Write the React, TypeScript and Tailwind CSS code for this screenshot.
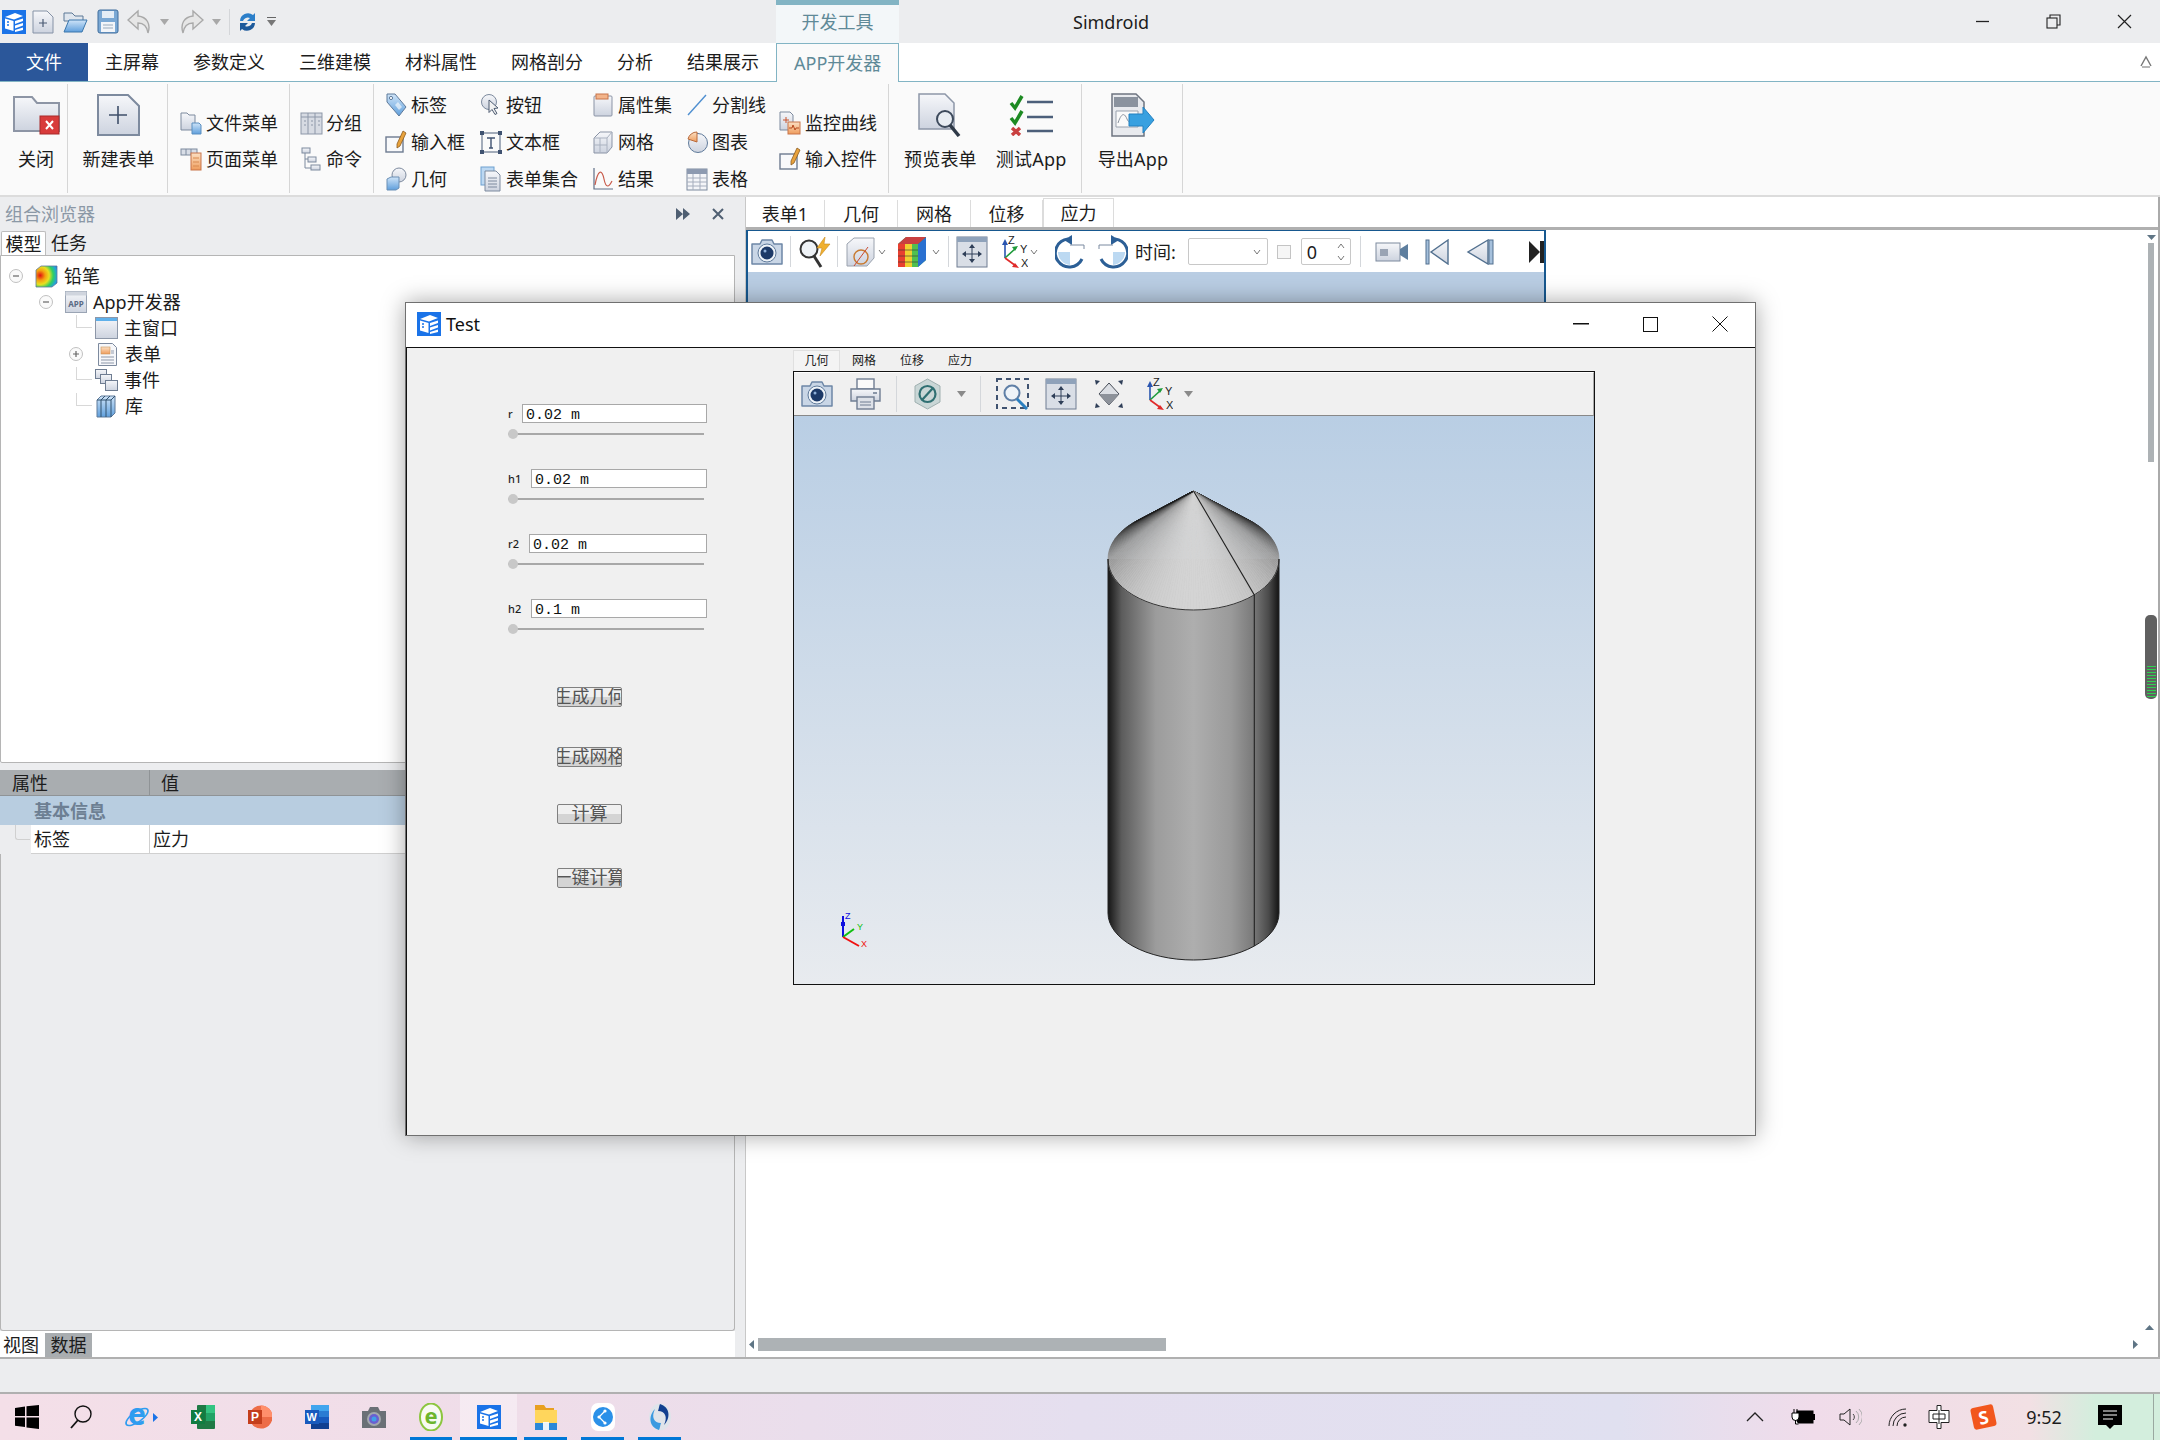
import type { ReactNode } from "react";

const S = ({ w, h, children, className = "" }: { w: number; h: number; children: ReactNode; className?: string }) => (
  <svg width={w} height={h} viewBox={`0 0 ${w} ${h}`} className={`block shrink-0 ${className}`} aria-hidden="true">
    {children}
  </svg>
);

const Defs = () => (
  <svg width="0" height="0" className="absolute">
    <defs>
      <linearGradient id="sheet" x1="0" y1="0" x2="0" y2="1">
        <stop offset="0" stopColor="#f6f7fa" />
        <stop offset="1" stopColor="#cdd3df" />
      </linearGradient>
      <linearGradient id="blue" x1="0" y1="0" x2="0" y2="1">
        <stop offset="0" stopColor="#cfe4f8" />
        <stop offset="1" stopColor="#5f9fdc" />
      </linearGradient>
      <linearGradient id="orange" x1="0" y1="0" x2="0" y2="1">
        <stop offset="0" stopColor="#fbe0c4" />
        <stop offset="1" stopColor="#ef9c5c" />
      </linearGradient>
      <linearGradient id="cyl" x1="1108" y1="0" x2="1279" y2="0" gradientUnits="userSpaceOnUse">
        <stop offset="0" stopColor="#161616" />
        <stop offset="0.08" stopColor="#5c5c5c" />
        <stop offset="0.28" stopColor="#9c9c9c" />
        <stop offset="0.5" stopColor="#aeaeae" />
        <stop offset="0.72" stopColor="#9a9a9a" />
        <stop offset="0.85" stopColor="#7a7a7a" />
        <stop offset="0.94" stopColor="#4a4a4a" />
        <stop offset="1" stopColor="#141414" />
      </linearGradient>
      <radialGradient id="rainbow" cx="0.2" cy="0.45" r="0.95">
        <stop offset="0" stopColor="#e01010" />
        <stop offset="0.25" stopColor="#f5a010" />
        <stop offset="0.45" stopColor="#e8e020" />
        <stop offset="0.65" stopColor="#30d060" />
        <stop offset="0.85" stopColor="#20a0e0" />
        <stop offset="1" stopColor="#2050c0" />
      </radialGradient>
    </defs>
  </svg>
);

const Logo = ({ s = 24 }: { s?: number }) => (
  <svg width={s} height={s} viewBox="0 0 24 24" className="block shrink-0" aria-hidden="true">
    <rect width="24" height="24" fill="#1a73e8" />
    <path d="M3 7L13 3l8 3-9 3.500zM13 11l8-2.500V11l-8 3zM13 15.500l8-2.500v2.500l-8 3zM13 20l8-2.500V20l-8 2z" fill="#fff" />
    <path d="M3 8.500l8.500 2.500v10L3 18.500z" fill="#fff" />
    <path d="M5 12h2M5 15h2" stroke="#1a73e8" strokeWidth="1.400" />
  </svg>
);

/* ---- quick access ---- */
const QNew = () => (
  <S w={22} h={24}>
    <path d="M1 1h14l6 6v16H1z" fill="url(#sheet)" stroke="#8592a6" />
    <path d="M11 9v8M7 13h8" stroke="#4a5a74" strokeWidth="1.2" />
  </S>
);
const QOpen = () => (
  <S w={25} h={24}>
    <path d="M1 3h8l3 3h8v5H1z" fill="#dfe6ee" stroke="#5d7896" />
    <path d="M1 22l5-12h18l-5 12z" fill="url(#blue)" stroke="#3a76ac" />
  </S>
);
const QSave = () => (
  <S w={22} h={25}>
    <rect x="1" y="1" width="20" height="23" rx="2" fill="#7aa8d4" stroke="#3f6d9c" />
    <rect x="5" y="2" width="12" height="7" fill="#e4edf6" />
    <rect x="4" y="13" width="14" height="10" fill="#f2f5f9" />
    <path d="M6 16h10M6 19h10" stroke="#9ab" />
  </S>
);
const QUndo = ({ flip = false }: { flip?: boolean }) => (
  <S w={26} h={26} className={flip ? "-scale-x-100" : ""}>
    <path d="M11 2L1 11l10 9v-6c6 0 9 3 10 10 3-9-1-16-10-17z" fill="#e6e6e6" stroke="#a9a9a9" strokeWidth="1.4" />
  </S>
);
const TriDown = ({ c = "#a8a8a8", w = 9, h = 6 }: { c?: string; w?: number; h?: number }) => (
  <S w={w} h={h}>
    <path d={`M0 0h${w}L${w / 2} ${h}z`} fill={c} />
  </S>
);
const QRefresh = () => (
  <S w={19} h={24}>
    <path d="M2 11a8 8 0 0 1 13-6l2-2v8h-8l3-3a5 5 0 0 0-7 3z" fill="#2c7fc9" />
    <path d="M17 13a8 8 0 0 1-13 6l-2 2v-8h8l-3 3a5 5 0 0 0 7-3z" fill="#1d5a9b" />
  </S>
);

/* ---- ribbon ---- */
const CloseIcon = () => (
  <S w={47} h={40}>
    <path d="M1 2h18l5 6h22v28H1z" fill="url(#sheet)" stroke="#8d95a5" strokeWidth="2" />
    <rect x="27" y="21" width="19" height="18" fill="#d83b3b" stroke="#a82a2a" />
    <path d="M33 26l7 8M40 26l-7 8" stroke="#fff" strokeWidth="2" />
  </S>
);
const NewFormIcon = () => (
  <S w={43} h={42}>
    <path d="M1 1h30l11 11v29H1z" fill="url(#sheet)" stroke="#7d8a9e" strokeWidth="2" />
    <path d="M21 12v18M12 21h18" stroke="#3f4f6a" strokeWidth="1.6" />
  </S>
);
const FileMenuIcon = () => (
  <S w={22} h={24}>
    <path d="M1 2h6l2 2h6v15H1z" fill="url(#sheet)" stroke="#7d8a9e" />
    <path d="M12 12h7l2 2v9h-9z" fill="url(#blue)" stroke="#5b8fc0" />
  </S>
);
const PageMenuIcon = () => (
  <S w={22} h={24}>
    <rect x="1" y="2" width="16" height="6" fill="#d8dde6" stroke="#7d8a9e" />
    <path d="M6 2v6M11 2v6" stroke="#7d8a9e" />
    <rect x="11" y="6" width="10" height="17" fill="url(#orange)" stroke="#c8744a" />
    <path d="M13 11h6M13 15h6M13 19h6" stroke="#d88a50" />
  </S>
);
const GroupIcon = () => (
  <S w={23} h={24}>
    <rect x="1" y="2" width="21" height="21" fill="#d7dbe3" stroke="#8d97a8" />
    <path d="M1 6h21M8 2v21M15 2v21" stroke="#8d97a8" />
    <path d="M4 10h2M4 14h2M11 10h2M11 14h2M18 10h2M18 14h2" stroke="#8d97a8" />
  </S>
);
const CommandIcon = () => (
  <S w={22} h={24}>
    <rect x="2" y="1" width="8" height="5" fill="url(#sheet)" stroke="#7d8a9e" />
    <rect x="8" y="10" width="8" height="5" fill="url(#sheet)" stroke="#7d8a9e" />
    <rect x="11" y="18" width="9" height="5" fill="url(#sheet)" stroke="#7d8a9e" />
    <path d="M5 6v15h6M5 12h3" fill="none" stroke="#7d8a9e" />
  </S>
);
const TagIcon = () => (
  <S w={22} h={24}>
    <path d="M2 1h8l11 13-7 9L2 9z" fill="url(#blue)" stroke="#5f7a9a" />
    <circle cx="6" cy="5" r="1.6" fill="#fff" stroke="#5f7a9a" />
    <path d="M10 12l4 5 3-3-4-5z" fill="#fff" opacity=".6" />
  </S>
);
const BtnIcon = () => (
  <S w={22} h={24}>
    <circle cx="9" cy="9" r="7.5" fill="url(#sheet)" stroke="#7d8a9e" />
    <path d="M9 7l9 8-4 .5 3 5-2 1-3-5-3 3z" fill="#f2f2f2" stroke="#4c5a70" />
  </S>
);
const AttrIcon = () => (
  <S w={20} h={24}>
    <rect x="1" y="3" width="18" height="20" rx="1" fill="url(#sheet)" stroke="#8a93a5" />
    <rect x="3" y="1" width="12" height="5" fill="#f3b48a" stroke="#c8744a" />
  </S>
);
const DivIcon = () => (
  <S w={22} h={24}>
    <path d="M2 22L20 2" stroke="#4f8fd0" strokeWidth="1.4" />
  </S>
);
const InputIcon = () => (
  <S w={22} h={24}>
    <rect x="1" y="7" width="17" height="15" fill="#f8f9fb" stroke="#6d7b90" strokeWidth="1.4" />
    <path d="M18 1l3 2-6 13-3 2 0-4z" fill="#e8a23c" stroke="#8a5a20" strokeWidth=".8" />
  </S>
);
const TextBoxIcon = () => (
  <S w={22} h={24}>
    <rect x="2" y="3" width="18" height="19" fill="none" stroke="#4c5f7a" />
    <path d="M0 1h4v4H0zM18 1h4v4h-4zM0 20h4v4H0zM18 20h4v4h-4z" fill="#3f5270" />
    <path d="M7 8h8M11 8v10M9 18h4" stroke="#3f5270" strokeWidth="1.4" fill="none" />
  </S>
);
const MeshIcon = () => (
  <S w={20} h={24}>
    <path d="M1 8l6-6h12v15l-5 6H1z" fill="url(#sheet)" stroke="#8a93a5" />
    <path d="M1 8h13v15M14 8l5-6M7 8v15M1 15h13" stroke="#aab2c0" fill="none" />
  </S>
);
const PieIcon = () => (
  <S w={22} h={24}>
    <circle cx="12" cy="13" r="9.5" fill="url(#sheet)" stroke="#5f7a9a" />
    <path d="M11 12V2a9 9 0 0 0-9 7z" fill="url(#orange)" stroke="#b9693a" />
  </S>
);
const GeomIcon = () => (
  <S w={22} h={24}>
    <circle cx="14" cy="8" r="7" fill="url(#sheet)" stroke="#7d8a9e" />
    <path d="M2 12l4-2h8v11l-3 2H2z" fill="url(#blue)" stroke="#6a8fb5" />
  </S>
);
const FormSetIcon = () => (
  <S w={22} h={26}>
    <rect x="1" y="1" width="13" height="18" fill="#bcd8f2" stroke="#6da0d0" />
    <path d="M5 5h11l4 4v16H5z" fill="url(#sheet)" stroke="#7d8a9e" />
    <path d="M8 12h9M8 15h9M8 18h9M8 21h9" stroke="#7d8a9e" />
  </S>
);
const ResultIcon = () => (
  <S w={22} h={24}>
    <path d="M2 1v21h19" fill="none" stroke="#5f6f88" strokeWidth="1.2" />
    <path d="M3 18c3-16 7-16 9-6s5 8 8 2" fill="none" stroke="#c85a4a" strokeWidth="1.2" />
  </S>
);
const TableIcon = () => (
  <S w={22} h={24}>
    <rect x="1" y="2" width="20" height="21" fill="#f4f5f8" stroke="#7d8a9e" />
    <rect x="1" y="2" width="20" height="5" fill="#8d9ab0" />
    <path d="M1 11h20M1 15h20M1 19h20M7 7v16M14 7v16" stroke="#a6aebd" />
  </S>
);
const MonitorIcon = () => (
  <S w={22} h={24}>
    <path d="M1 1h10l3 3v15H1z" fill="url(#sheet)" stroke="#7d8a9e" />
    <path d="M7 6v6M4 9h6" stroke="#c8542f" />
    <rect x="9" y="11" width="12" height="12" fill="url(#orange)" stroke="#c8744a" />
    <path d="M10 17h3l1-3 2 5 1-2h3" fill="none" stroke="#b84a20" />
  </S>
);
const PreviewIcon = () => (
  <S w={44} h={44}>
    <path d="M1 1h26l9 9v26H1z" fill="url(#sheet)" stroke="#8d97a8" strokeWidth="1.5" />
    <circle cx="27" cy="26" r="8" fill="#e8edf3" stroke="#3d4a5c" strokeWidth="2" />
    <path d="M32 32l9 11" stroke="#2f3a48" strokeWidth="3.5" />
  </S>
);
const TestIcon = () => (
  <S w={45} h={42}>
    <path d="M2 9l4 5 7-12" fill="none" stroke="#1d8a22" strokeWidth="3.5" />
    <path d="M2 24l4 5 7-12" fill="none" stroke="#1d8a22" strokeWidth="3.5" />
    <path d="M3 34l8 7M11 34l-8 7" stroke="#c94040" strokeWidth="3.5" />
    <path d="M18 8h26M18 23h26M18 37h26" stroke="#4c5f7a" strokeWidth="2.4" />
  </S>
);
const ExportIcon = () => (
  <S w={44} h={44}>
    <path d="M1 1h24l8 8v34H1z" fill="#e8eaee" stroke="#6d7480" strokeWidth="1.5" />
    <rect x="3" y="4" width="24" height="10" fill="#8a929e" />
    <path d="M5 18h22v16H5z" fill="#fafafa" stroke="#9aa2ae" />
    <path d="M7 30c4-12 7-9 9-4s5 3 8-4" fill="none" stroke="#8a929e" />
    <path d="M18 21h14v-7l11 13-11 13v-7H18z" fill="#37a0e0" stroke="#2280c0" />
  </S>
);

/* ---- embedded toolbars ---- */
const Camera = ({ w = 34 }: { w?: number }) => (
  <svg width={w} height={28} viewBox="0 0 34 28" className="block shrink-0" aria-hidden="true">
    <path d="M2 6h8l2-4h10l2 4h8v20H2z" fill="#c9d6e6" stroke="#6d87a6" strokeWidth="1.5" strokeLinejoin="round" />
    <circle cx="17" cy="15" r="9" fill="#eef3f8" stroke="#5f7a9a" />
    <circle cx="17" cy="15" r="6.5" fill="#1d3a68" />
    <circle cx="15" cy="13" r="1.5" fill="#8fb0d8" />
  </svg>
);
const FitIcon = ({ w = 32 }: { w?: number }) => (
  <svg width={w} height={32} viewBox="0 0 32 32" className="block shrink-0" aria-hidden="true">
    <rect x="1" y="1" width="30" height="30" fill="#d9dee6" stroke="#6f7d92" />
    <rect x="1" y="1" width="30" height="5" fill="#8fa2ba" />
    <path d="M16 9v17M8 18h16" stroke="#2f3f58" />
    <path d="M16 8l-3 4h6zM16 27l-3-4h6zM6 18l4-3v6zM26 18l-4-3v6z" fill="#2f3f58" />
  </svg>
);
const Axes = ({ w = 28, h = 34 }: { w?: number; h?: number }) => (
  <svg width={w} height={h} viewBox="0 0 28 34" className="block shrink-0 [font-family:'Liberation_Sans',sans-serif]" aria-hidden="true">
    <path d="M5 23V7" stroke="#2a55b0" strokeWidth="1.6" />
    <path d="M5 4l-3 6h6z" fill="#2a55b0" />
    <path d="M5 23l11-10" stroke="#1d9a3a" strokeWidth="1.6" />
    <path d="M18 11l-6 1 3 4z" fill="#1d9a3a" />
    <path d="M5 23l11 8" stroke="#e02a2a" strokeWidth="1.6" />
    <path d="M19 33l-7-1 3-4z" fill="#e02a2a" />
    <text x="8" y="9" fontSize="11" fill="#222">Z</text>
    <text x="20" y="18" fontSize="11" fill="#222">Y</text>
    <text x="21" y="32" fontSize="11" fill="#222">X</text>
  </svg>
);
const Rot = ({ flip = false }: { flip?: boolean }) => (
  <S w={32} h={34} className={flip ? "-scale-x-100" : ""}>
    <path d="M3 17h12v13A13 13 0 0 1 3 17z" fill="#bcd9f2" />
    <path d="M13 4A14 14 0 1 0 27 24" fill="none" stroke="#2c5f96" strokeWidth="3" />
    <path d="M17 0l-8 5 8 5z" fill="#2c5f96" />
    <path d="M15 10h14v4" fill="none" stroke="#7a8aa0" />
  </S>
);
const Sep = ({ className = "" }: { className?: string }) => <div className={`w-px self-stretch my-[3px] bg-[#d4d7db] ${className}`} />;
const V = ({ className = "" }: { className?: string }) => (
  <S w={8} h={6} className={className}>
    <path d="M1 1l3 4 3-4" fill="none" stroke="#777" />
  </S>
);

const TOOL_TEXT = "text-[18px] leading-none";

const FormToolbar = () => (
  <div className="flex items-center h-[41px] bg-white py-[2px] overflow-hidden">
    <div className="ml-[2px]"><Camera /></div>
    <Sep className="ml-[6px]" />
    <div className="ml-[6px]">
      <S w={35} h={32}>
        <circle cx="12" cy="13" r="8.5" fill="#eef2f6" stroke="#333" strokeWidth="2" />
        <path d="M17 20l7 11" stroke="#333" strokeWidth="3" />
        <path d="M28 1l-8 11h5l-2 8 10-12h-6z" fill="#f0b030" stroke="#c88a20" strokeWidth=".6" />
      </S>
    </div>
    <Sep className="ml-[5px]" />
    <div className="ml-[7px]">
      <S w={32} h={32}>
        <path d="M2 8l7-6h20v20l-7 8H2z" fill="url(#sheet)" stroke="#9aa2ae" />
        <circle cx="16" cy="21" r="7" fill="none" stroke="#c87a30" strokeWidth="1.4" />
        <path d="M9 30l14-19" stroke="#c84a30" />
      </S>
    </div>
    <V className="ml-[1px]" />
    <div className="ml-[11px]">
      <S w={30} h={32}>
        <path d="M1 8l8-7h20v23l-8 7H1z" fill="#28a050" />
        <rect x="1" y="8" width="7" height="23" fill="#e84030" />
        <rect x="8" y="8" width="7" height="23" fill="#f0d030" />
        <rect x="15" y="8" width="6" height="23" fill="#50c050" />
        <path d="M1 14h20M1 20h20M1 26h20" stroke="#333" strokeWidth=".6" />
        <path d="M21 31l8-7V1l-8 7z" fill="#2a70d0" />
        <path d="M1 8l8-7h20l-8 7z" fill="#c84040" />
      </S>
    </div>
    <V className="ml-[5px]" />
    <Sep className="ml-[8px]" />
    <div className="ml-[7px]"><FitIcon /></div>
    <div className="ml-[12px]"><Axes h={34} /></div>
    <V className="ml-[2px]" />
    <div className="ml-[17px]"><Rot /></div>
    <div className="ml-[9px]"><Rot flip /></div>
    <span className={`ml-[7px] ${TOOL_TEXT}`}>时间:</span>
    <div className="ml-[12px] shrink-0 w-[80px] h-[27px] border border-[#c8c8c8] rounded-[2px] flex items-center justify-end pr-[6px]"><V /></div>
    <div className="ml-[9px] shrink-0 w-[14px] h-[14px] border border-[#c4c4c4] bg-[#f6f6f6]" />
    <div className="ml-[10px] shrink-0 w-[50px] h-[27px] border border-[#c8c8c8] rounded-[2px] flex items-center justify-between px-[5px]">
      <span className="text-[18px] leading-none">0</span>
      <div className="flex flex-col gap-[6px]"><V className="rotate-180" /><V /></div>
    </div>
    <Sep className="ml-[9px]" />
    <div className="ml-[14px]">
      <S w={34} h={24}>
        <rect x="1" y="3" width="24" height="18" fill="url(#sheet)" stroke="#7d8a9e" />
        <rect x="5" y="9" width="8" height="7" fill="#9aa4b4" />
        <path d="M25 9l8-5v16l-8-5z" fill="#5e7f9f" />
      </S>
    </div>
    <div className="ml-[16px]">
      <S w={24} h={26}>
        <rect x="1" y="1" width="3" height="24" fill="#a5c0dc" stroke="#52708f" />
        <path d="M23 1L6 13l17 12z" fill="url(#sheet)" stroke="#52708f" strokeWidth="1.4" />
      </S>
    </div>
    <div className="ml-[17px]">
      <S w={28} h={26}>
        <path d="M22 1L2 13l20 12z" fill="url(#sheet)" stroke="#52708f" strokeWidth="1.4" />
        <rect x="23" y="1" width="4" height="24" fill="#a5c0dc" stroke="#52708f" />
      </S>
    </div>
    <div className="ml-[35px]">
      <S w={15} h={26}>
        <path d="M0 2l11 11L0 24z" fill="#222" />
        <rect x="11" y="2" width="4" height="22" fill="#222" />
      </S>
    </div>
  </div>
);

const DialogToolbar = () => (
  <div className="flex items-center h-[44px] bg-[#f0f0f0] border-t border-t-white border-r border-r-[#aaa] border-b border-b-[#888] pl-[6px]">
    <Camera />
    <div className="ml-[15px]">
      <S w={33} h={34}>
        <rect x="8" y="2" width="17" height="10" fill="#fafafa" stroke="#6f7d92" strokeWidth="1.4" />
        <path d="M2 12h29v12H2z" fill="url(#sheet)" stroke="#6f7d92" strokeWidth="1.4" />
        <rect x="8" y="20" width="17" height="12" fill="#dde1e8" stroke="#6f7d92" strokeWidth="1.4" />
        <path d="M11 25h11M11 28h11" stroke="#6f7d92" />
        <rect x="24" y="15" width="4" height="2" fill="#8a96a8" />
      </S>
    </div>
    <Sep className="ml-[14px]" />
    <div className="ml-[17px]">
      <S w={27} h={32}>
        <path d="M13.5 1L26 8v16l-12.5 7L1 24V8z" fill="#c9d6d6" stroke="#9fb0b0" />
        <circle cx="13.5" cy="16" r="8" fill="none" stroke="#2f6f72" strokeWidth="2.2" />
        <path d="M8 22l11-12" stroke="#2f6f72" strokeWidth="2.2" />
      </S>
    </div>
    <div className="ml-[16px]"><TriDown c="#8a8a8a" /></div>
    <Sep className="ml-[14px]" />
    <div className="ml-[15px]">
      <S w={33} h={32}>
        <rect x="1" y="1" width="31" height="29" fill="none" stroke="#3f5270" strokeWidth="2" strokeDasharray="5 4" />
        <circle cx="16" cy="15" r="7.5" fill="#eef3f8" stroke="#5f7fa6" strokeWidth="2" />
        <path d="M21 21l10 10" stroke="#2a7fc0" strokeWidth="3" />
      </S>
    </div>
    <div className="ml-[16px]"><FitIcon /></div>
    <div className="ml-[16px]">
      <S w={32} h={32}>
        <path d="M16 5L26 16 16 27 6 16z" fill="#dcdfe4" stroke="#444a55" />
        <path d="M16 16l10 0-10 11-10-11z" fill="#8d929a" />
        <path d="M2 2l5 1-4 4zM30 2l-5 1 4 4zM2 30l5-1-4-4zM30 30l-5-1 4-4z" fill="#2f3f58" />
      </S>
    </div>
    <div className="ml-[20px]"><Axes w={28} h={34} /></div>
    <div className="ml-[11px]"><TriDown c="#8a8a8a" /></div>
  </div>
);

/* ---- model view ---- */
const Model = () => {
  const cx = 1193.5;
  const cy = 558;
  const rx = 85.5;
  const ry = 51;
  const apex = [1193.5, 490];
  // only the part of the cone facing the viewer, tangent points sit at sin = -0.75
  const fan = Array.from({ length: 180 }, (_, i) => {
    const a = (i / 180) * Math.PI * 2;
    const b = ((i + 1) / 180) * Math.PI * 2;
    const mid = (a + b) / 2;
    const front = Math.sin(mid);
    const u = Math.min(1, (front + 0.75) / 0.75);
    const v = front > 0 ? 158 + front * 54 : 28 + 130 * Math.pow(Math.max(0, u), 0.9);
    const g = Math.round(v);
    return {
      show: front > -0.76,
      d: `M${apex[0]} ${apex[1]}L${cx + rx * Math.cos(a)} ${cy + ry * Math.sin(a)}L${cx + rx * Math.cos(b)} ${cy + ry * Math.sin(b)}z`,
      c: `rgb(${g},${g},${g})`,
    };
  }).filter((t) => t.show);
  return (
    <svg viewBox="794 415 800 568" className="block w-full h-full" aria-hidden="true">
      <path d="M1108 558V912A85.5 47 0 0 0 1279 912V558z" fill="url(#cyl)" />
      {fan.map((t, i) => (
        <path key={i} d={t.d} fill={t.c} stroke={t.c} strokeWidth="0.6" />
      ))}
      <path d="M1108 558A85.5 51 0 0 0 1279 558" fill="none" stroke="#333" strokeWidth="1" />
      <path d="M1108 558V912A85.5 47 0 0 0 1279 912V558" fill="none" stroke="#222" strokeWidth="1" />
      <path d="M1193.5 490L1254.3 594V945" fill="none" stroke="#222" strokeWidth="1.1" />
      <path d="M843 936V915" stroke="#1010e0" strokeWidth="2" />
      <path d="M841 921h4v4h-4z" fill="#1010e0" />
      <path d="M843 936l11-8" stroke="#10c010" strokeWidth="2" />
      <path d="M843 936l16 9" stroke="#f01010" strokeWidth="2" />
      <text x="845" y="918" fontSize="9" fill="#1010e0" fontFamily="Liberation Sans">Z</text>
      <text x="857" y="929" fontSize="9" fill="#10c010" fontFamily="Liberation Sans">Y</text>
      <text x="861" y="946" fontSize="9" fill="#f01010" fontFamily="Liberation Sans">X</text>
    </svg>
  );
};

/* ---- data ---- */
const TABS = ["主屏幕", "参数定义", "三维建模", "材料属性", "网格剖分", "分析", "结果展示"];

const COLS = [
  { w: "w-[95px]", items: [["标签", TagIcon], ["输入框", InputIcon], ["几何", GeomIcon]] },
  { w: "w-[112px]", items: [["按钮", BtnIcon], ["文本框", TextBoxIcon], ["表单集合", FormSetIcon]] },
  { w: "w-[94px]", items: [["属性集", AttrIcon], ["网格", MeshIcon], ["结果", ResultIcon]] },
  { w: "w-[93px]", items: [["分割线", DivIcon], ["图表", PieIcon], ["表格", TableIcon]] },
] as const;

const FIELDS = [
  { label: "r", value: "0.02 m", w: "w-[185px]" },
  { label: "h1", value: "0.02 m", w: "w-[176px]" },
  { label: "r2", value: "0.02 m", w: "w-[178px]" },
  { label: "h2", value: "0.1 m", w: "w-[176px]" },
];

const BUTTONS = [
  { t: "生成几何", m: "mt-[53px]" },
  { t: "生成网格", m: "mt-[40px]" },
  { t: "计算", m: "mt-[37px]" },
  { t: "一键计算", m: "mt-[44px]" },
];

const SmallItem = ({ icon: I, label, h = "h-[36px]" }: { icon: () => ReactNode; label: string; h?: string }) => (
  <div className={`flex items-center gap-[4px] whitespace-nowrap text-[18px] leading-none ${h}`}>
    <div className="w-[22px] flex justify-center"><I /></div>
    <span>{label}</span>
  </div>
);

const LargeItem = ({ icon: I, label, className = "" }: { icon: () => ReactNode; label: string; className?: string }) => (
  <div className={`flex flex-col items-center ${className}`}>
    <div className="h-[44px] flex items-center justify-center mt-[9px]"><I /></div>
    <span className="mt-[9px] text-[18px] leading-[26px] whitespace-nowrap">{label}</span>
  </div>
);

const Circle = ({ plus = false }: { plus?: boolean }) => (
  <S w={14} h={14}>
    <circle cx="7" cy="7" r="6.5" fill="#fafafa" stroke="#c0c0c0" />
    <path d={plus ? "M4 7h6M7 4v6" : "M4 7h6"} stroke="#666" strokeWidth="1.2" />
  </S>
);

const TreeRow = ({ pl, box, icon, label, line }: { pl: string; box?: ReactNode; icon: ReactNode; label: string; line?: boolean }) => (
  <div className={`relative flex items-center h-[26px] ${pl} text-[18px] leading-none`}>
    {line && (
      <div className="absolute left-[75px] top-0 w-[16px] h-[13px] border-l border-b border-[#d8d8d8]" />
    )}
    {box}
    {icon}
    <span className="ml-[6px] whitespace-nowrap">{label}</span>
  </div>
);

export default function App() {
  return (
    <div className="relative w-[2160px] h-[1440px] overflow-hidden bg-[#ecedef] text-[#1c1c1c] [font-family:'Noto_Sans','Noto_Sans_CJK_SC',sans-serif]">
      <Defs />

      {/* title bar */}
      <div className="flex h-[43px] bg-[#ecedef]">
        <div className="w-[776px] flex items-center pl-[2px]">
          <Logo />
          <div className="ml-[6px]"><QNew /></div>
          <div className="ml-[9px]"><QOpen /></div>
          <div className="ml-[9px]"><QSave /></div>
          <div className="ml-[8px]"><QUndo /></div>
          <div className="ml-[7px]"><TriDown /></div>
          <div className="ml-[9px]"><QUndo flip /></div>
          <div className="ml-[8px]"><TriDown /></div>
          <div className="ml-[8px] w-px h-[26px] bg-[#d4d6d9]" />
          <div className="ml-[8px]"><QRefresh /></div>
          <div className="ml-[10px] flex flex-col gap-[2px]">
            <div className="w-[9px] h-px bg-[#666]" />
            <TriDown c="#777" />
          </div>
        </div>
        <div className="w-[123px] bg-[#f3f7f9] border-t-[5px] border-[#82b4c4] flex items-center justify-center text-[18px] text-[#5f8a98] leading-none pb-[5px]">
          开发工具
        </div>
        <div className="flex-1 flex items-center pl-[174px] text-[18px] leading-none">Simdroid</div>
        <div className="flex items-center pr-[28px]">
          <S w={15} h={15}><path d="M1 7.5h13" stroke="#222" strokeWidth="1.3" /></S>
          <div className="ml-[56px]">
            <S w={15} h={15}>
              <rect x="1" y="4" width="10" height="10" fill="none" stroke="#222" strokeWidth="1.1" />
              <path d="M4 4V1h10v10h-3" fill="none" stroke="#222" strokeWidth="1.1" />
            </S>
          </div>
          <div className="ml-[56px]">
            <S w={15} h={15}><path d="M1 1l13 13M14 1L1 14" stroke="#222" strokeWidth="1.2" /></S>
          </div>
        </div>
      </div>

      {/* ribbon tabs */}
      <div className="flex h-[39px] bg-white border-b border-[#82b4c4] text-[18px] leading-none">
        <div className="w-[88px] bg-[#2b579a] text-white flex items-center justify-center">文件</div>
        {TABS.map((t) => (
          <div key={t} className="px-[17px] flex items-center whitespace-nowrap">{t}</div>
        ))}
        <div className="px-[17px] h-[39px] flex items-center whitespace-nowrap bg-[#fafafa] text-[#5f8a98] border border-b-0 border-[#82b4c4]">APP开发器</div>
        <div className="flex-1 flex justify-end items-center pr-[8px]">
          <S w={12} h={14}>
            <path d="M1 11l5-9 5 9" fill="none" stroke="#777" strokeWidth="1.4" />
            <path d="M2 12h8" stroke="#999" strokeWidth="1.4" />
          </S>
        </div>
      </div>

      {/* ribbon */}
      <div className="flex h-[115px] bg-[#fafafa] border-b-2 border-[#dcdcdc] pt-[2px]">
        <div className="flex w-full h-[109px]">
          <LargeItem icon={CloseIcon} label="关闭" className="w-[68px] pl-[5px] border-r border-[#d6d6d6]" />
          <LargeItem icon={NewFormIcon} label="新建表单" className="w-[100px] pl-[2px] border-r border-[#d6d6d6]" />
          <div className="w-[122px] border-r border-[#d6d6d6] pl-[12px] pt-[21px]">
            <SmallItem icon={FileMenuIcon} label="文件菜单" />
            <SmallItem icon={PageMenuIcon} label="页面菜单" />
          </div>
          <div className="w-[84px] border-r border-[#d6d6d6] pl-[10px] pt-[21px]">
            <SmallItem icon={GroupIcon} label="分组" />
            <SmallItem icon={CommandIcon} label="命令" />
          </div>
          <div className="w-[515px] border-r border-[#d6d6d6] pl-[11px] flex">
            {COLS.map((c, ci) => (
              <div key={ci} className={`${c.w} pt-[2px]`}>
                {c.items.map(([label, icon]) => (
                  <SmallItem key={label} icon={icon} label={label} h="h-[37px]" />
                ))}
              </div>
            ))}
            <div className="pt-[21px]">
              <SmallItem icon={MonitorIcon} label="监控曲线" />
              <SmallItem icon={InputIcon} label="输入控件" />
            </div>
          </div>
          <div className="w-[193px] border-r border-[#d6d6d6] flex pl-[15px] gap-[19px] tracking-[0.2px]">
            <LargeItem icon={PreviewIcon} label="预览表单" />
            <LargeItem icon={TestIcon} label="测试App" />
          </div>
          <LargeItem icon={ExportIcon} label="导出App" className="w-[101px] pl-[2px] tracking-[0.2px] border-r border-[#d6d6d6]" />
        </div>
      </div>

      {/* main area */}
      <div className="flex h-[1160px]">
        {/* left dock */}
        <div className="w-[735px] flex flex-col">
          <div className="h-[31px] flex items-center justify-between pl-[5px] pr-[10px] text-[18px] leading-none text-[#8b98a6] pt-[2px]">
            <span>组合浏览器</span>
            <div className="flex items-center gap-[20px]">
              <S w={16} h={14}><path d="M1 1l7 6-7 6zM8 1l7 6-7 6z" fill="#4f5f72" /></S>
              <S w={14} h={14}><path d="M2 2l10 10M12 2L2 12" stroke="#4f5f72" strokeWidth="2" /></S>
            </div>
          </div>
          <div className="flex h-[27px] text-[18px] leading-none pl-[1px] items-end">
            <div className="w-[45px] h-[24px] bg-white border border-b-0 border-[#bdbdbd] rounded-t-[2px] flex items-center justify-center">模型</div>
            <div className="ml-[4px] w-[38px] h-[24px] flex items-center justify-center">任务</div>
          </div>
          <div className="h-[508px] bg-white border border-[#b5b5b5] rounded-b-[2px] pt-[7px]">
            <TreeRow
              pl="pl-[8px]"
              box={<Circle />}
              icon={
                <div className="ml-[12px]">
                  <S w={23} h={23}>
                    <path d="M1 5l5-4h16v17l-5 4H1z" fill="url(#rainbow)" stroke="#5f7a9a" strokeWidth=".8" />
                  </S>
                </div>
              }
              label="铅笔"
            />
            <TreeRow
              pl="pl-[38px]"
              box={<Circle />}
              icon={
                <div className="ml-[12px] relative">
                  <S w={22} h={22}>
                    <rect x=".5" y=".5" width="21" height="21" fill="url(#sheet)" stroke="#9aa4b4" />
                    <rect x=".5" y=".5" width="21" height="4" fill="#d0d5de" />
                  </S>
                  <span className="absolute inset-x-0 top-[7px] text-center text-[8px] font-bold leading-[12px] text-[#5a6a84]">APP</span>
                </div>
              }
              label="App开发器"
            />
            <TreeRow
              line
              pl="pl-[94px]"
              icon={
                <S w={23} h={22}>
                  <rect x=".5" y=".5" width="22" height="21" fill="url(#sheet)" stroke="#8d97a8" />
                  <rect x="1" y="1" width="21" height="3" fill="#5fb0ea" />
                </S>
              }
              label="主窗口"
            />
            <TreeRow
              pl="pl-[68px]"
              box={<Circle plus />}
              icon={
                <div className="ml-[15px] mr-[2px]">
                  <S w={19} h={23}>
                    <path d="M.5.5h14l4 4v18H.5z" fill="#f6f7fa" stroke="#7d8a9e" />
                    <rect x="3" y="4" width="9" height="7" fill="url(#orange)" stroke="#c8945a" strokeWidth=".6" />
                    <path d="M3 14h13M3 17h13M3 20h13" stroke="#8d97a8" />
                    <rect x="13" y="7" width="3" height="4" fill="#c5cad4" />
                  </S>
                </div>
              }
              label="表单"
            />
            <TreeRow
              line
              pl="pl-[94px]"
              icon={
                <S w={23} h={22}>
                  <rect x=".5" y=".5" width="11" height="9" fill="url(#sheet)" stroke="#6f7d92" />
                  <rect x="5.5" y="5.5" width="11" height="9" fill="url(#sheet)" stroke="#6f7d92" />
                  <rect x="10.5" y="11.5" width="12" height="10" fill="url(#sheet)" stroke="#6f7d92" />
                </S>
              }
              label="事件"
            />
            <TreeRow
              line
              pl="pl-[95px]"
              icon={
                <div className="mr-[3px]">
                  <S w={20} h={23}>
                    <path d="M1 5l4-4h14v17l-4 4H1z" fill="url(#blue)" stroke="#5f7a9a" />
                    <path d="M1 5h14v17M5 5v17M10 5v17M15 5l4-4M5 5l4-4M10 5l4-4" fill="none" stroke="#33526f" />
                  </S>
                </div>
              }
              label="库"
            />
          </div>
          <div className="mt-[7px] h-[26px] bg-[#a9adb0] border-b border-[#8f9396] flex text-[18px] leading-none">
            <div className="w-[150px] pl-[12px] border-r border-[#8f9396] flex items-center">属性</div>
            <div className="pl-[11px] flex items-center">值</div>
          </div>
          <div className="h-[29px] bg-[#b8cde0] pl-[34px] flex items-center text-[18px] leading-none font-bold text-[#6d7f93]">基本信息</div>
          <div className="flex h-[29px] text-[18px] leading-none">
            <div className="relative w-[31px]">
              <div className="absolute left-[15px] top-0 w-[15px] h-[15px] border-l border-b border-[#d0d0d0] rounded-bl-[3px]" />
            </div>
            <div className="flex-1 flex bg-white border-b border-[#d0d0d0]">
              <div className="w-[119px] pl-[3px] border-r border-[#d0d0d0] flex items-center">标签</div>
              <div className="pl-[3px] flex items-center">应力</div>
            </div>
          </div>
          <div className="h-[477px] border border-t-0 border-[#b5b5b5] rounded-b-[3px]" />
          <div className="flex-1 bg-white flex items-end text-[18px] leading-none pl-[3px]">
            <div className="w-[39px] h-[24px] flex items-center">视图</div>
            <div className="ml-[3px] w-[47px] h-[24px] bg-[#a9adb0] flex items-center justify-center">数据</div>
          </div>
        </div>

        {/* right area */}
        <div className="relative ml-[10px] flex-1 flex flex-col bg-white border-l border-[#c8c8c8] border-r-2 border-r-[#aaaaaa]">
          <div className="flex h-[33px] border-b-[3px] border-[#b0b0b0] text-[18px] leading-none items-end">
            <div className="w-[79px] h-[27px] border-r border-[#dcdcdc] flex items-center justify-center">表单1</div>
            <div className="w-[73px] h-[27px] border-r border-[#dcdcdc] flex items-center justify-center">几何</div>
            <div className="w-[73px] h-[27px] border-r border-[#dcdcdc] flex items-center justify-center">网格</div>
            <div className="w-[72px] h-[27px] border-r border-[#dcdcdc] flex items-center justify-center">位移</div>
            <div className="w-[71px] h-[29px] border-x border-t border-[#dcdcdc] flex items-center justify-center">应力</div>
          </div>
          <div className="w-[800px] h-[600px] border-x-2 border-t border-[#17588f]">
            <FormToolbar />
            <div className="h-full bg-[#b9cde3]" />
          </div>
          {/* scrollbars */}
          <div className="absolute right-[3px] top-[38px] w-[8px] flex flex-col items-center">
            <TriDown c="#5f7585" w={9} h={5} />
            <div className="mt-[3px] w-[6px] h-[219px] bg-[#adb2b5]" />
          </div>
          <div className="absolute right-[1px] top-[418px] w-[12px] h-[84px] rounded-[5px] bg-[#606060] flex flex-col justify-end items-center gap-[2px] pb-[2px]">
            {Array.from({ length: 11 }, (_, i) => (
              <div key={i} className="w-[9px] h-px bg-[#2ed14f]" />
            ))}
          </div>
          <div className="absolute right-[4px] bottom-[27px] rotate-180"><TriDown c="#5f7585" w={9} h={5} /></div>
          <div className="absolute left-[3px] right-[20px] bottom-[6px] h-[14px] flex items-center">
            <S w={5} h={9}><path d="M5 0v9L0 4.500z" fill="#5f7585" /></S>
            <div className="ml-[4px] w-[408px] h-[13px] bg-[#adb2b5]" />
            <div className="ml-auto"><S w={5} h={9}><path d="M0 0v9l5-4.500z" fill="#5f7585" /></S></div>
          </div>
        </div>
      </div>

      {/* status bar */}
      <div className="h-[37px] border-y-2 border-[#b0b0b0] bg-[#ecedef]" />

      {/* taskbar */}
      <div className="flex h-[46px] bg-[linear-gradient(90deg,#f4dfe8_0%,#efdde9_25%,#e5dfef_50%,#e0e0f0_75%,#f0dcea_84%,#f2e0e4_94%,#d3eedd_97%,#d3eedd_100%)]">
        <div className="w-[54px] flex items-center justify-center">
          <S w={24} h={24}><path d="M0 3l10-1.500V11H0zM11.500 1.300L24 0v11H11.500zM0 12.500h10V22L0 20.700zM11.500 12.500H24V24l-12.500-1.500z" fill="#000" /></S>
        </div>
        <div className="w-[54px] flex items-center justify-center">
          <S w={24} h={24}>
            <circle cx="14" cy="9" r="8" fill="none" stroke="#111" strokeWidth="1.4" />
            <path d="M9 15l-7 8" stroke="#111" strokeWidth="1.8" />
          </S>
        </div>
        <div className="w-[66px] flex items-center justify-center gap-[3px]">
          <div className="relative">
            <S w={26} h={26}>
              <ellipse cx="13" cy="13" rx="13" ry="5" transform="rotate(-35 13 13)" fill="none" stroke="#2f9cf0" strokeWidth="1.6" />
            </S>
            <span className="absolute inset-0 flex items-center justify-center text-[30px] leading-none font-bold text-[#2f9cf0] pb-[6px]">e</span>
          </div>
          <S w={5} h={9}><path d="M0 0v9l5-4.500z" fill="#1a73e8" /></S>
        </div>
        <div className="w-[57px] flex items-center justify-center">
          <S w={24} h={24}>
            <rect x="6" width="18" height="24" rx="1" fill="#1f7a45" />
            <path d="M15 0h9v8h-9z" fill="#33c481" />
            <path d="M15 8h9v8h-9z" fill="#21a366" />
            <rect y="5" width="14" height="14" fill="#107c41" />
            <text x="3" y="16" fontSize="12" fontWeight="bold" fill="#fff" fontFamily="Liberation Sans">X</text>
          </S>
        </div>
        <div className="w-[57px] flex items-center justify-center">
          <S w={24} h={24}>
            <circle cx="13" cy="12" r="11.500" fill="#ed6c47" />
            <path d="M13 .500A11.500 11.500 0 0 1 24.500 12H13z" fill="#ff8f6b" />
            <rect y="5" width="14" height="14" fill="#c43e1c" />
            <text x="3" y="16" fontSize="12" fontWeight="bold" fill="#fff" fontFamily="Liberation Sans">P</text>
          </S>
        </div>
        <div className="w-[57px] flex items-center justify-center">
          <S w={24} h={24}>
            <rect x="6" width="18" height="24" rx="1" fill="#2b7cd3" />
            <path d="M6 0h18v6H6z" fill="#41a5ee" />
            <path d="M6 12h18v6H6z" fill="#185abd" />
            <path d="M6 18h18v6H6z" fill="#103f91" />
            <rect y="5" width="14" height="14" fill="#185abd" />
            <text x="1.500" y="16" fontSize="11" fontWeight="bold" fill="#fff" fontFamily="Liberation Sans">W</text>
          </S>
        </div>
        <div className="w-[57px] flex items-center justify-center">
          <S w={24} h={22}>
            <path d="M0 5h6l2-4h8l2 4h6v17H0z" fill="#6a7076" />
            <circle cx="12" cy="13" r="7" fill="#a3a8ae" />
            <circle cx="12" cy="13" r="5" fill="#6a5fd0" />
            <circle cx="12" cy="13" r="2.500" fill="#3fa0e8" />
          </S>
        </div>
        <div className="relative w-[58px] flex items-center justify-center">
          <div className="relative">
            <S w={24} h={28}>
              <ellipse cx="12" cy="14" rx="11" ry="13.500" fill="#f7faf2" stroke="#8cc63f" strokeWidth="2" />
            </S>
            <span className="absolute inset-0 flex items-center justify-center text-[22px] leading-none font-bold text-[#6cb52d] pb-[4px]">e</span>
          </div>
          <div className="absolute bottom-0 inset-x-[8px] h-[3px] bg-[#0078d7]" />
        </div>
        <div className="relative w-[57px] bg-white/40 flex items-center justify-center">
          <Logo />
          <div className="absolute bottom-0 inset-x-0 h-[3px] bg-[#0078d7]" />
        </div>
        <div className="relative w-[57px] flex items-center justify-center">
          <S w={22} h={25}>
            <path d="M0 0h9l2 3h8v3H0z" fill="#e8a020" />
            <rect y="5" width="22" height="15" fill="#ffd65c" />
            <rect y="18" width="22" height="7" fill="#2b88d8" />
            <rect x="8" y="17" width="6" height="8" fill="#fff" opacity=".9" />
          </S>
          <div className="absolute bottom-0 inset-x-[7px] h-[3px] bg-[#0078d7]" />
        </div>
        <div className="relative w-[57px] flex items-center justify-center">
          <S w={24} h={28}>
            <rect width="24" height="28" rx="7" fill="#fff" />
            <circle cx="12" cy="14" r="10" fill="#2b90e8" />
            <path d="M8 14l6-6M8 14l6 6" stroke="#fff" strokeWidth="1.200" />
            <circle cx="8" cy="14" r="1.600" fill="#fff" />
            <circle cx="14" cy="8" r="1.600" fill="#fff" />
            <circle cx="14" cy="20" r="1.600" fill="#fff" />
          </S>
          <div className="absolute bottom-0 inset-x-[7px] h-[3px] bg-[#0078d7]" />
        </div>
        <div className="relative w-[57px] flex items-center justify-center">
          <S w={24} h={28}>
            <ellipse cx="12" cy="14" rx="11" ry="13.500" fill="#dfe4ea" />
            <path d="M12 1c10 3 11 14 4 21 4-8 1-14-6-14 1-3 1-5 2-7z" fill="#123f8f" />
            <path d="M11 27C1 24 0 13 7 6c-4 8-1 14 6 14-1 3-1 5-2 7z" fill="#3a9ae0" />
          </S>
          <div className="absolute bottom-0 inset-x-[7px] h-[3px] bg-[#0078d7]" />
        </div>

        {/* tray */}
        <div className="ml-auto flex items-center">
          <div className="w-[48px] flex justify-center">
            <S w={18} h={10}><path d="M1 9l8-8 8 8" fill="none" stroke="#222" strokeWidth="1.300" /></S>
          </div>
          <div className="w-[48px] flex justify-center">
            <S w={24} h={16}>
              <rect x="6" y="2" width="16" height="12" fill="#000" stroke="#000" />
              <rect x="22" y="5" width="2" height="6" fill="#000" />
              <path d="M3 0v4M6 0v4M1 4h7v4a3 3 0 0 1-7 0zM4.500 11v4h3" fill="#fff" stroke="#000" />
            </S>
          </div>
          <div className="w-[46px] flex justify-center">
            <S w={23} h={20}>
              <path d="M1 7h4l6-5v16l-6-5H1z" fill="none" stroke="#222" />
              <path d="M14 7a4 4 0 0 1 0 6" fill="none" stroke="#444" />
              <path d="M17 4a8 8 0 0 1 0 12M20 2a11 11 0 0 1 0 16" fill="none" stroke="#aaa" />
            </S>
          </div>
          <div className="w-[50px] flex justify-center">
            <S w={20} h={19}>
              <path d="M1 18A17 17 0 0 1 18 1M5 18A13 13 0 0 1 18 5M9 18a9 9 0 0 1 9-9" fill="none" stroke="#222" />
              <circle cx="17" cy="17" r="1.700" fill="#222" />
            </S>
          </div>
          <div className="w-[32px] flex justify-center">
            <S w={22} h={24}>
              <path d="M9 .500h4v5h8v12h-8v6H9v-6H1v-12h8z" fill="#fff" stroke="#222" />
              <path d="M5 9h12v5H5zM11 5v14" fill="none" stroke="#222" />
            </S>
          </div>
          <div className="w-[56px] flex justify-center">
            <div className="w-[23px] h-[22px] bg-[#f2561d] rounded-[3px] -rotate-12 flex items-center justify-center text-white text-[18px] font-bold leading-none">S</div>
          </div>
          <div className="w-[66px] text-center text-[18px] leading-none">9:52</div>
          <div className="w-[66px] flex justify-center">
            <S w={24} h={24}>
              <path d="M0 0h24v20h-8l-4 4-4-4H0z" fill="#000" />
              <path d="M5 6h14M5 10h14M5 14h10" stroke="#fff" />
            </S>
          </div>
          <div className="w-[17px] self-stretch pl-[10px]"><div className="w-px h-full bg-[#9aa8a0]" /></div>
        </div>
      </div>

      {/* Test dialog */}
      <div className="absolute left-[405px] top-[302px] w-[1351px] h-[834px] flex flex-col bg-white border border-[#707070] shadow-[0_0_22px_rgba(0,0,0,0.35)]">
        <div className="h-[44px] flex items-center pl-[11px] pr-[27px] pb-[2px] text-[18px] leading-none">
          <Logo />
          <span className="ml-[5px] text-[#111]">Test</span>
          <div className="ml-auto flex items-center gap-[54px]">
            <S w={16} h={2}><rect width="16" height="1.500" fill="#111" /></S>
            <S w={15} h={15}><rect x=".5" y=".5" width="14" height="14" fill="none" stroke="#111" /></S>
            <S w={16} h={16}><path d="M.5.5l15 15M15.500.5l-15 15" stroke="#111" /></S>
          </div>
        </div>
        <div className="flex-1 flex bg-[#f0f0f0] border-t border-l border-[#111]">
          {/* form column */}
          <div className="w-[386px] pl-[101px] pt-[56px]">
            <div className="w-[199px] flex flex-col gap-[30px]">
              {FIELDS.map((f) => (
                <div key={f.label}>
                  <div className="flex items-center justify-between h-[19px]">
                    <span className="text-[11px] leading-none font-medium">{f.label}</span>
                    <div className={`${f.w} h-[19px] bg-white border border-[#a8a8a8] pl-[3px] pt-[3px] flex items-center text-[15px] leading-none text-[#111] whitespace-pre [font-family:'Liberation_Mono',monospace]`}>
                      {f.value}
                    </div>
                  </div>
                  <div className="relative mt-[6px] h-[10px] w-[196px] flex items-center">
                    <div className="w-full h-[2px] bg-[#a8a8a8]" />
                    <div className="absolute left-0 top-0 w-[10px] h-[10px] rounded-full bg-[#c8c8c8]" />
                  </div>
                </div>
              ))}
            </div>
            <div className="ml-[49px] flex flex-col">
              {BUTTONS.map((b) => (
                <div
                  key={b.t}
                  className={`${b.m} w-[65px] h-[20px] flex justify-center items-center overflow-hidden whitespace-nowrap rounded-[2px] border border-[#808080] bg-[linear-gradient(#f0f0f0_50%,#d4d4d4_50%)] text-[18px] leading-none text-[#555] [font-family:'Liberation_Serif','Noto_Sans_CJK_SC',serif]`}
                >
                  <span className="shrink-0">{b.t}</span>
                </div>
              ))}
            </div>
          </div>

          {/* viewer */}
          <div className="pt-[2px]">
            <div className="flex h-[21px] text-[12px] leading-none">
              <div className="w-[47px] bg-[#f4f4f4] border-x border-t border-[#e0e0e0] flex items-center justify-center">几何</div>
              <div className="w-[48px] flex items-center justify-center">网格</div>
              <div className="w-[48px] flex items-center justify-center">位移</div>
              <div className="w-[48px] flex items-center justify-center">应力</div>
            </div>
            <div className="w-[802px] h-[614px] border border-[#111] flex flex-col">
              <DialogToolbar />
              <div className="flex-1 min-h-0 bg-[linear-gradient(#b9cee4,#e8ebef)]">
                <Model />
              </div>
            </div>
          </div>
        </div>
      </div>
    </div>
  );
}
